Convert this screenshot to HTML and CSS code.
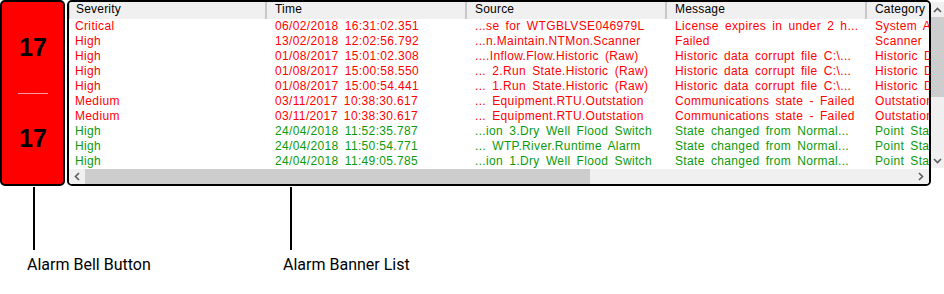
FILE: index.html
```html
<!DOCTYPE HTML>
<html>
<head>
<meta charset="utf-8">
<title>Alarm Banner</title>
<link rel="stylesheet" href="styles.css">
</head>

<body>
<div class="panel">
	<div class="bell">
		<div class="bell-half">17</div>
		<div class="bell-rule"></div>
		<div class="bell-half">17</div>
	</div>

	<div class="banner">
		<div class="list">
			<div class="row head">
				<span class="c1">Severity</span><span class="c2">Time</span><span class="c3">Source</span><span class="c4">Message</span><span class="c5">Category</span>
			</div>
			<div class="row red">
				<span class="c1">Critical</span><span class="c2">06/02/2018 16:31:02.351</span><span class="c3">...se for WTGBLVSE046979L</span><span class="c4">License expires in under 2 h...</span><span class="c5">System Alarm</span>
			</div>
			<div class="row red">
				<span class="c1">High</span><span class="c2">13/02/2018 12:02:56.792</span><span class="c3">...n.Maintain.NTMon.Scanner</span><span class="c4">Failed</span><span class="c5">Scanner</span>
			</div>
			<div class="row red">
				<span class="c1">High</span><span class="c2">01/08/2017 15:01:02.308</span><span class="c3">....Inflow.Flow.Historic (Raw)</span><span class="c4">Historic data corrupt file C:\...</span><span class="c5">Historic Data</span>
			</div>
			<div class="row red">
				<span class="c1">High</span><span class="c2">01/08/2017 15:00:58.550</span><span class="c3">... 2.Run State.Historic (Raw)</span><span class="c4">Historic data corrupt file C:\...</span><span class="c5">Historic Data</span>
			</div>
			<div class="row red">
				<span class="c1">High</span><span class="c2">01/08/2017 15:00:54.441</span><span class="c3">... 1.Run State.Historic (Raw)</span><span class="c4">Historic data corrupt file C:\...</span><span class="c5">Historic Data</span>
			</div>
			<div class="row red">
				<span class="c1">Medium</span><span class="c2">03/11/2017 10:38:30.617</span><span class="c3">... Equipment.RTU.Outstation</span><span class="c4">Communications state - Failed</span><span class="c5">Outstation</span>
			</div>
			<div class="row red">
				<span class="c1">Medium</span><span class="c2">03/11/2017 10:38:30.617</span><span class="c3">... Equipment.RTU.Outstation</span><span class="c4">Communications state - Failed</span><span class="c5">Outstation</span>
			</div>
			<div class="row green">
				<span class="c1">High</span><span class="c2">24/04/2018 11:52:35.787</span><span class="c3">...ion 3.Dry Well Flood Switch</span><span class="c4">State changed from Normal...</span><span class="c5">Point State</span>
			</div>
			<div class="row green">
				<span class="c1">High</span><span class="c2">24/04/2018 11:50:54.771</span><span class="c3">... WTP.River.Runtime Alarm</span><span class="c4">State changed from Normal...</span><span class="c5">Point State</span>
			</div>
			<div class="row green">
				<span class="c1">High</span><span class="c2">24/04/2018 11:49:05.785</span><span class="c3">...ion 1.Dry Well Flood Switch</span><span class="c4">State changed from Normal...</span><span class="c5">Point State</span>
			</div>
		</div>
		<div class="hscroll">
			<span class="sb-btn"><svg width="6" height="9" viewBox="0 0 6 9"><path d="M5 1 L1.5 4.5 L5 8" fill="none" stroke="#5a5a5a" stroke-width="1.6"/></svg></span>
			<span class="h-thumb"></span>
			<span class="h-track"></span>
			<span class="sb-btn"><svg width="6" height="9" viewBox="0 0 6 9"><path d="M1 1 L4.5 4.5 L1 8" fill="none" stroke="#5a5a5a" stroke-width="1.6"/></svg></span>
		</div>
	</div>

	<div class="vscroll">
		<span class="sb-btn v"><svg width="9" height="6" viewBox="0 0 9 6"><path d="M1 5 L4.5 1.5 L8 5" fill="none" stroke="#5a5a5a" stroke-width="1.6"/></svg></span>
		<span class="v-thumb"></span>
		<span class="v-track"></span>
		<span class="sb-btn v"><svg width="9" height="6" viewBox="0 0 9 6"><path d="M1 1 L4.5 4.5 L8 1" fill="none" stroke="#5a5a5a" stroke-width="1.6"/></svg></span>
	</div>
</div>

<div class="callouts">
	<div class="callout">
		<div class="stem"></div>
		<div class="label">Alarm Bell Button</div>
	</div>
	<div class="callout second">
		<div class="stem"></div>
		<div class="label">Alarm Banner List</div>
	</div>
</div>
</body>
</html>
```

FILE: styles.css
```css
* {margin:0; padding:0; box-sizing:border-box;}
body {background:#fff; font-family:"Liberation Sans", Arial, sans-serif; width:944px; height:294px; overflow:hidden;}

/* top strip: bell + banner + scrollbar */
.panel {display:flex; align-items:flex-start; height:187px;}

.bell {width:65px; height:186px; background:#ff0000; border:2px solid #000; border-radius:5px; display:flex; flex-direction:column; align-items:center;}
.bell-half {flex:1; display:flex; align-items:center; justify-content:center; font-size:25px; font-weight:bold; color:#000; padding-left:1px;}
.bell-rule {width:30px; height:1px; background:#ff9a9a; margin-left:1px;}

.banner {width:864px; height:186px; margin-left:2px; border:2px solid #000; border-radius:5px; overflow:hidden; display:flex; flex-direction:column; background:#fff;}
.list {flex:1; overflow:hidden;}
.row {display:flex; height:15px; line-height:15px; font-size:12px; letter-spacing:.35px; word-spacing:2.5px; white-space:nowrap;}
.row span {overflow:hidden; flex:none; padding-left:8px;}
.row .c1 {width:198px; padding-left:6px;}
.row .c2, .row .c3, .row .c4 {width:200px;}
.row .c5 {width:62px;}
.red {color:#ff0000;}
.green {color:#0b9a0b;}

.head {background:#f0f0f0; color:#000; height:17px; letter-spacing:.2px;}
.head span {border-right:2px solid #c8c8c8; line-height:15px; height:17px;}
.head .c1 {border-left:1px solid #c8c8c8;}
.head .c5 {border-right:none;}

.hscroll {height:15px; display:flex; background:#f0f0f0;}
.sb-btn {width:16px; flex:none; display:flex; align-items:center; justify-content:center;}
.h-thumb {width:505px; background:#cdcdcd;}
.h-track {flex:1;}

.vscroll {width:13px; height:166px; margin-top:2px; display:flex; flex-direction:column; background:#f0f0f0;}
.sb-btn.v {width:13px; height:15px;}
.v-thumb {height:80px; background:#cdcdcd;}
.v-track {flex:1;}

/* annotation pointers */
.callouts {display:flex; padding-left:27px;}
.callout {width:256px;}
.stem {width:2px; height:63px; background:#000; margin-left:6px;}
.second .stem {margin-left:7px;}
.label {margin-top:5px; font-family:Roboto, "Liberation Sans", sans-serif; font-size:16px; line-height:20px; color:#000;}
```
